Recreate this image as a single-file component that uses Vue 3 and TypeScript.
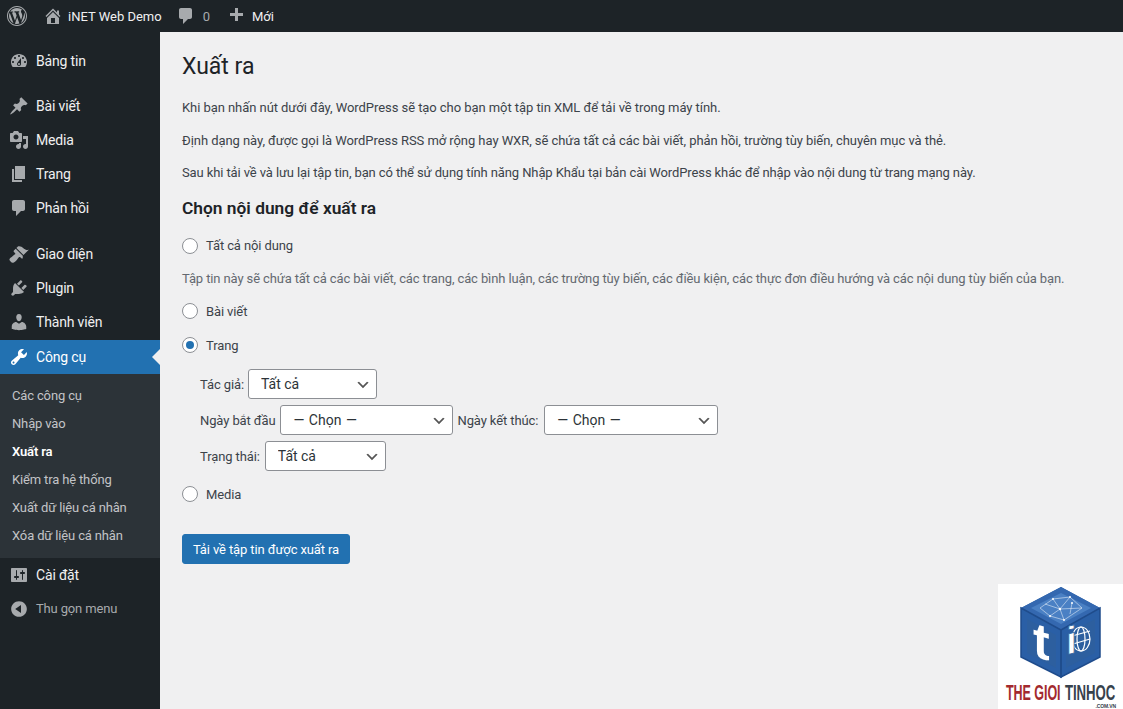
<script setup lang="ts">
interface MenuItem { label: string; d: string }
const icons = {
  dash: 'M3.76 16h12.48c1.1-1.37 1.76-3.11 1.76-5 0-4.42-3.58-8-8-8s-8 3.58-8 8c0 1.89.66 3.63 1.76 5zM10 4c.55 0 1 .45 1 1s-.45 1-1 1-1-.45-1-1 .45-1 1-1zM6 6c.55 0 1 .45 1 1s-.45 1-1 1-1-.45-1-1 .45-1 1-1zm8 0c.55 0 1 .45 1 1s-.45 1-1 1-1-.45-1-1 .45-1 1-1zm-5.37 5.55L12 7v6c0 1.1-.9 2-2 2s-2-.9-2-2c0-.57.24-1.08.63-1.45zM4 10c.55 0 1 .45 1 1s-.45 1-1 1-1-.45-1-1 .45-1 1-1zm12 0c.55 0 1 .45 1 1s-.45 1-1 1-1-.45-1-1 .45-1 1-1zm-5 3c0-.55-.45-1-1-1s-1 .45-1 1 .45 1 1 1 1-.45 1-1z',
  post: 'M10.44 3.02l1.82-1.82 6.36 6.35-1.83 1.82c-1.05-.68-2.48-.57-3.41.36l-.75.75c-.92.93-1.04 2.35-.35 3.41l-1.83 1.82-2.41-2.41-2.8 2.79c-.42.42-3.38 2.71-3.8 2.29s1.86-3.39 2.28-3.81l2.79-2.79L4.1 9.36l1.83-1.82c1.05.69 2.48.57 3.4-.36l.75-.75c.93-.92 1.05-2.35.36-3.41z',
  media: 'M13 11V4c0-.55-.45-1-1-1h-1.67L9 1H5L3.67 3H2c-.55 0-1 .45-1 1v7c0 .55.45 1 1 1h10c.55 0 1-.45 1-1zM7 4.5c1.38 0 2.5 1.12 2.5 2.5S8.38 9.5 7 9.5 4.5 8.38 4.5 7 5.62 4.5 7 4.5zM14 6h5v10.5c0 1.38-1.12 2.5-2.5 2.5S14 17.88 14 16.5s1.12-2.5 2.5-2.5c.17 0 .34.02.5.05V9h-3V6zm-4 8.05V13h2v3.5c0 1.38-1.12 2.5-2.5 2.5S7 17.88 7 16.5 8.12 14 9.5 14c.17 0 .34.02.5.05z',
  page: 'M6 15V2h10v13H6zm-1 1h8v2H3V5h2v11z',
  comment: 'M5 2h9c1.1 0 2 .9 2 2v7c0 1.1-.9 2-2 2h-2l-5 5v-5H5c-1.1 0-2-.9-2-2V4c0-1.1.9-2 2-2z',
  appearance: 'M14.48 11.06L7.41 3.99l1.5-1.5c.5-.56 2.3-.47 3.51.32 1.21.8 1.43 1.28 2.91 2.1 1.18.64 2.45 1.26 4.45.85zm-.71.71L6.7 4.7 4.93 6.47c-.39.39-.39 1.02 0 1.41l1.06 1.06c.39.39.39 1.03 0 1.42-.6.6-1.43 1.11-2.21 1.69-.35.26-.7.53-1.01.84C1.43 13.23.4 14.85.4 15.6c0 .75.5 1.3 1.21 2.01.73.73 1.3 1.21 2.01 1.21.75 0 2.37-1.03 3.72-2.38.31-.31.58-.66.84-1.01.58-.78 1.09-1.61 1.69-2.21.39-.39 1.03-.39 1.42 0l1.06 1.06c.39.39 1.02.39 1.41 0z',
  plugin: 'M13.11 4.36L9.87 7.6 8 5.73l3.24-3.24c.35-.34 1.05-.2 1.56.32.52.51.66 1.21.31 1.55zm-8 1.77l.91-1.12 9.01 9.01-1.19.84c-.71.71-2.63 1.16-3.82 1.16H6.14L4.9 17.26c-.59.59-1.54.59-2.12 0-.59-.58-.59-1.53 0-2.12l1.24-1.24v-3.88c0-1.13.4-3.19 1.09-3.89zm7.26 3.97l3.24-3.24c.34-.35 1.04-.21 1.55.31.52.51.66 1.21.31 1.55l-3.24 3.25z',
  users: 'M10 9.25c-2.27 0-2.73-3.44-2.73-3.44C7 4.02 7.82 2 9.97 2c2.16 0 2.98 2.02 2.71 3.81 0 0-.41 3.44-2.68 3.44zm0 2.57L12.72 10c2.39 0 4.52 2.33 4.52 4.53v2.49s-3.65 1.13-7.24 1.13c-3.65 0-7.24-1.13-7.24-1.13v-2.49c0-2.25 1.94-4.48 4.47-4.48z',
  tools: 'M16.68 9.77c-1.34 1.34-3.3 1.67-4.95.99l-5.41 6.52c-.99.99-2.59.99-3.58 0s-.99-2.59 0-3.57l6.52-5.42c-.68-1.65-.35-3.61.99-4.95 1.28-1.28 3.12-1.62 4.72-1.06l-2.89 2.89 2.82 2.82 2.86-2.87c.53 1.58.18 3.39-1.08 4.65zM3.81 16.21c.4.39 1.04.39 1.43 0 .4-.4.4-1.04 0-1.43-.39-.4-1.03-.4-1.43 0-.39.39-.39 1.03 0 1.43z',
  settings: 'M18 16V4c0-.55-.45-1-1-1H3c-.55 0-1 .45-1 1v12c0 .55.45 1 1 1h14c.55 0 1-.45 1-1zM8 11h1c.55 0 1 .45 1 1s-.45 1-1 1H8v1.5c0 .28-.22.5-.5.5s-.5-.22-.5-.5V13H6c-.55 0-1-.45-1-1s.45-1 1-1h1V5.5c0-.28.22-.5.5-.5s.5.22.5.5V11zm5-2h-1c-.55 0-1-.45-1-1s.45-1 1-1h1V5.5c0-.28.22-.5.5-.5s.5.22.5.5V7h1c.55 0 1 .45 1 1s-.45 1-1 1h-1v5.5c0 .28-.22.5-.5.5s-.5-.22-.5-.5V9z',
  collapse: 'M10 2.16c4.33 0 7.84 3.51 7.84 7.84s-3.51 7.84-7.84 7.84S2.16 14.33 2.16 10 5.71 2.16 10 2.16zm2 11.72V6.12L6.18 9.97z',
  home: 'M16 8.5l1.53 1.53-1.06 1.06L10 4.62l-6.47 6.47-1.06-1.06L10 2.5l4 4v-2h2v4zm-6-2.46l6 5.99V18H4v-5.97zM12 17v-5H8v5h4z',
  plus: 'M17 7v3h-5v5H9v-5H4V7h5V2h3v5h5z',
  wp: 'M20 10c0-5.52-4.48-10-10-10S0 4.48 0 10s4.48 10 10 10 10-4.48 10-10zM10 1.01c4.96 0 8.99 4.03 8.99 8.99s-4.03 8.99-8.99 8.99S1.01 14.96 1.01 10 5.04 1.01 10 1.01zM8.01 14.82L4.96 6.61c.49-.03 1.05-.08 1.05-.08.43-.05.38-1.01-.06-.99 0 0-1.29.1-2.13.1-.15 0-.33 0-.52-.01 1.44-2.17 3.9-3.6 6.7-3.6 2.09 0 3.99.79 5.41 2.09-.6-.08-1.45.35-1.45 1.42 0 .66.38 1.22.79 1.88.31.54.5 1.22.5 2.21 0 1.34-1.27 4.48-1.27 4.48l-2.71-7.5c.48-.03.75-.16.75-.16.43-.05.38-1.1-.05-1.08 0 0-1.3.11-2.14.11-.78 0-2.11-.11-2.11-.11-.43-.02-.48 1.06-.05 1.08l.84.08 1.12 3.04zm6.02 2.15L16.64 10s.67-1.69.39-3.81c.63 1.14.94 2.42.94 3.81 0 2.96-1.56 5.58-3.94 6.97zM2.68 6.77L6.5 17.25c-2.67-1.3-4.47-4.08-4.47-7.25 0-1.16.2-2.23.65-3.23zm7.45 4.53l2.29 6.25c-.75.27-1.57.42-2.42.42-.72 0-1.41-.11-2.06-.3z',
}
const group1: MenuItem[] = [{ label: 'Bảng tin', d: icons.dash }]
const group2: MenuItem[] = [
  { label: 'Bài viết', d: icons.post },
  { label: 'Media', d: icons.media },
  { label: 'Trang', d: icons.page },
  { label: 'Phản hồi', d: icons.comment },
]
const group3: MenuItem[] = [
  { label: 'Giao diện', d: icons.appearance },
  { label: 'Plugin', d: icons.plugin },
  { label: 'Thành viên', d: icons.users },
]
const subs = ['Các công cụ', 'Nhập vào', 'Xuất ra', 'Kiểm tra hệ thống', 'Xuất dữ liệu cá nhân', 'Xóa dữ liệu cá nhân']
</script>

<template>
  <div class="page">
    <header class="bar">
      <span class="bar-wp"><svg class="i20" viewBox="0 0 20 20"><path :d="icons.wp" /></svg></span>
      <span class="bar-item home"><svg class="i20" viewBox="0 0 20 20"><path :d="icons.home" /></svg>iNET Web Demo</span>
      <span class="bar-item dim"><svg class="i20" viewBox="0 0 20 20"><path :d="icons.comment" /></svg><span class="count">0</span></span>
      <span class="bar-item new"><svg class="i20" viewBox="0 0 20 20"><path :d="icons.plus" /></svg>Mới</span>
    </header>
    <div class="body">
      <aside class="side">
        <ul class="menu first">
          <li v-for="m in group1" :key="m.label" class="mi"><svg class="i20" viewBox="0 0 20 20"><path :d="m.d" /></svg>{{ m.label }}</li>
        </ul>
        <ul class="menu gap">
          <li v-for="m in group2" :key="m.label" class="mi"><svg class="i20" viewBox="0 0 20 20"><path :d="m.d" /></svg>{{ m.label }}</li>
        </ul>
        <ul class="menu gap2">
          <li v-for="m in group3" :key="m.label" class="mi"><svg class="i20" viewBox="0 0 20 20"><path :d="m.d" /></svg>{{ m.label }}</li>
          <li class="mi active"><svg class="i20" viewBox="0 0 20 20"><path :d="icons.tools" /></svg>Công cụ<span class="arrow"></span></li>
        </ul>
        <ul class="sub">
          <li v-for="s in subs" :key="s" :class="{ cur: s === 'Xuất ra' }">{{ s }}</li>
        </ul>
        <ul class="menu">
          <li class="mi"><svg class="i20" viewBox="0 0 20 20"><path :d="icons.settings" /></svg>Cài đặt</li>
          <li class="mi collapse"><svg class="i20" viewBox="0 0 20 20"><path :d="icons.collapse" /></svg>Thu gọn menu</li>
        </ul>
      </aside>
      <main class="main">
        <h1>Xuất ra</h1>
        <p class="tight1">Khi bạn nhấn nút dưới đây, WordPress sẽ tạo cho bạn một tập tin XML để tải về trong máy tính.</p>
        <p class="tight1">Định dạng này, được gọi là WordPress RSS mở rộng hay WXR, sẽ chứa tất cả các bài viết, phản hồi, trường tùy biến, chuyên mục và thẻ.</p>
        <p>Sau khi tải về và lưu lại tập tin, bạn có thể sử dụng tính năng Nhập Khẩu tại bản cài WordPress khác để nhập vào nội dung từ trang mạng này.</p>
        <h2>Chọn nội dung để xuất ra</h2>
        <label class="radio r-all"><input type="radio" name="content" />Tất cả nội dung</label>
        <p class="desc">Tập tin này sẽ chứa tất cả các bài viết, các trang, các bình luận, các trường tùy biến, các điều kiện, các thực đơn điều hướng và các nội dung tùy biến của bạn.</p>
        <label class="radio r-post"><input type="radio" name="content" />Bài viết</label>
        <label class="radio r-page"><input type="radio" name="content" checked />Trang</label>
        <div class="filters">
          <div class="frow"><span class="lbl1">Tác giả:</span><select class="w129"><option>Tất cả</option></select></div>
          <div class="frow"><span>Ngày bắt đầu</span><select class="w173"><option>— Chọn —</option></select><span class="lbl2">Ngày kết thúc:</span><select class="w174"><option>— Chọn —</option></select></div>
          <div class="frow"><span>Trạng thái:</span><select class="w121"><option>Tất cả</option></select></div>
        </div>
        <label class="radio r-media"><input type="radio" name="content" />Media</label>
        <button class="btn" type="button">Tải về tập tin được xuất ra</button>
      </main>
    </div>
    <svg class="logo" viewBox="0 0 125 125" aria-label="Thế Giới Tin Học">
      <rect width="125" height="125" fill="#fff" />
      <polygon points="63,3 102,24 102,73 63,93 23,73 23,24" fill="#2a5fa6" />
      <polygon points="63,3 102,24 63,46 23,24" fill="#3468b0" />
      <polygon points="63,9 93,24 63,40 33,24" fill="#4a80c4" />
      <g stroke="#dfe9f5" stroke-width=".6" fill="none">
        <path d="M42 24 55 15 72 13 84 24 66 36 52 32 42 24 M55 15 62 25 72 13 M62 25 52 32 M62 25 66 36 M62 25 84 24 M47 20 62 25 M72 30 74 19" />
      </g>
      <g fill="#fff"><circle cx="55" cy="15" r="1" /><circle cx="62" cy="25" r="1.2" /><circle cx="72" cy="13" r="1" /><circle cx="66" cy="36" r="1" /><circle cx="52" cy="32" r="1" /><circle cx="74" cy="19" r="1" /></g>
      <polygon points="23,24 63,46 63,93 23,73" fill="none" stroke="#1f4c8c" stroke-width="1.5" />
      <polygon points="63,46 102,24 102,73 63,93" fill="none" stroke="#1f4c8c" stroke-width="1.5" />
      <polygon points="29,35 58,51 58,84 29,69" fill="#2d5f9f" />
      <polygon points="68,51 97,35 97,69 68,84" fill="#2d5f9f" />
      <text x="35" y="72" font-family="Liberation Sans, sans-serif" font-size="50" font-weight="700" fill="#fff" transform="skewY(16) translate(0 -10)">t</text>
      <g stroke="#fff" stroke-width="1.2" fill="none">
        <ellipse cx="83" cy="55" rx="9" ry="12" />
        <ellipse cx="83" cy="55" rx="4" ry="12" />
        <path d="M74 52 92 47 M75 60 92 55" />
      </g>
      <text x="68" y="66" font-family="Liberation Sans, sans-serif" font-size="39" font-weight="700" fill="#fff" stroke="#2d5f9f" stroke-width=".8" transform="skewY(-14) translate(0 22)">i</text>
      <text transform="translate(8 116) scale(.57 1)" font-family="Liberation Sans, sans-serif" font-size="22" font-weight="700" fill="#a32a2e">THE GIOI</text>
      <text transform="translate(67 116) scale(.6 1)" font-family="Liberation Sans, sans-serif" font-size="22" font-weight="700" fill="#37424c">TINHOC</text>
      <text x="118" y="124" text-anchor="end" font-family="Liberation Sans, sans-serif" font-size="5" font-weight="700" fill="#37424c">.COM.VN</text>
    </svg>
  </div>
</template>

<style>
html, body { margin: 0; background: #f0f0f1; }
</style>

<style scoped>
.page { height: 709px; overflow: hidden; position: relative; font-family: Roboto, "Noto Sans", sans-serif; font-size: 13px; letter-spacing: -0.11px; color: #3c434a; background: #f0f0f1; }
ul { list-style: none; margin: 0; padding: 0; }
.i20 { width: 20px; height: 20px; fill: currentColor; flex: none; }
.bar { height: 32px; background: #1d2327; color: #f0f0f1; display: flex; align-items: center; letter-spacing: 0; }
.bar .i20 { color: #a7aaad; }
.bar-wp { width: 36px; padding-left: 7px; box-sizing: border-box; display: flex; }
.bar-item { display: flex; align-items: center; gap: 5px; padding: 0 7px; }
.bar-item.dim { color: #a7aaad; }
.bar-item.new { gap: 6px; }
.count { margin-left: 2px; margin-right: 2px; }
.body { display: flex; height: 677px; }
.side { width: 160px; flex: none; background: #1d2327; color: #f0f0f1; }
.first { margin-top: 12px; }
.gap { margin-top: 11px; }
.gap2 { margin-top: 12px; }
.mi { height: 34px; box-sizing: border-box; padding-left: 9px; display: flex; align-items: center; gap: 7px; font-size: 14px; letter-spacing: -0.17px; position: relative; }
.mi .i20 { color: #a7aaad; }
.mi.active { background: #2271b1; color: #fff; margin-top: 1px; }
.mi.active .i20 { color: #fff; }
.arrow { position: absolute; right: 0; top: 9px; border: 8px solid transparent; border-right-color: #f0f0f1; border-left-width: 0; }
.collapse { color: #a7aaad; font-size: 13px; letter-spacing: -0.15px; padding-bottom: 1px; }
.collapse .i20 { margin-bottom: -1px; }
.sub { background: #2c3338; padding: 7.5px 0 8.5px; color: #c3c4c7; }
.sub li { height: 28px; line-height: 28px; padding-left: 12px; font-size: 13px; letter-spacing: -0.15px; }
.sub li.cur { color: #fff; font-weight: 600; }
.main { flex: 1; padding: 0 22px; }
h1 { font-size: 23px; font-weight: 400; line-height: 29px; margin: 20px 0 0; color: #1d2327; letter-spacing: 0; }
p { margin: 13px 0 0; line-height: 19.5px; }
.tight1 { letter-spacing: -0.06px; }
h1 + p { margin-top: 17px; }
h2 { font-size: 17.35px; font-weight: 600; color: #1d2327; line-height: 22px; margin: 14px 0 0; letter-spacing: 0; }
.radio { display: flex; align-items: center; gap: 8px; height: 20px; }
.radio input { appearance: none; width: 16px; height: 16px; margin: 0; border: 1px solid #8c8f94; border-radius: 50%; background: #fff; box-sizing: border-box; display: grid; place-items: center; }
.radio input:checked::before { content: ""; width: 8px; height: 8px; border-radius: 50%; background: #2271b1; }
.r-all { margin-top: 17px; }
.desc { margin-top: 13px; color: #646970; letter-spacing: -0.12px; }
.r-post { margin-top: 13px; }
.r-page { margin-top: 14px; }
.filters { margin: 14px 0 0 18px; display: flex; flex-direction: column; gap: 6px; }
.frow { display: flex; align-items: center; height: 30px; }
.frow > span { margin-right: 5px; }
.frow > .lbl1 { margin-right: 4px; }
.frow .lbl2 { margin-left: 4px; margin-right: 6px; }
select { appearance: none; height: 30px; box-sizing: border-box; border: 1px solid #8c8f94; border-radius: 3px; background: #fff url("data:image/svg+xml,%3Csvg xmlns='http://www.w3.org/2000/svg' width='20' height='20'%3E%3Cpath d='M5 6l5 5 5-5 2 1-7 7-7-7z' fill='%23555'/%3E%3C/svg%3E") no-repeat right 5px top 55%; background-size: 16px 16px; padding: 0 24px 0 12px; font: inherit; font-size: 14px; letter-spacing: 0; color: #2c3338; }
.w129 { width: 129px; }
.w173 { width: 173px; word-spacing: 1px; }
.w174 { width: 174px; word-spacing: 1px; }
.w121 { width: 121px; }
.r-media { margin-top: 13px; }
.btn { display: block; margin-top: 30px; width: 168px; height: 30px; padding: 0; background: #2271b1; color: #fff; border: 1px solid #2271b1; border-radius: 3px; font: inherit; letter-spacing: -0.11px; }
.logo { position: absolute; right: 0; bottom: 0; width: 125px; height: 125px; }
</style>
